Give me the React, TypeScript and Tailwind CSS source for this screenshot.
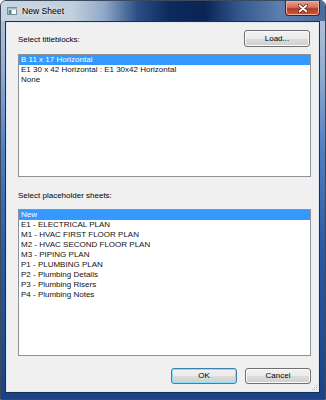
import React from 'react';

const titleblocks = [
  'B 11 x 17 Horizontal',
  'E1 30 x 42 Horizontal : E1 30x42 Horizontal',
  'None',
];

const sheets = [
  'New',
  'E1 - ELECTRICAL PLAN',
  'M1 - HVAC FIRST FLOOR PLAN',
  'M2 - HVAC SECOND FLOOR PLAN',
  'M3 - PIPING PLAN',
  'P1 - PLUMBING PLAN',
  'P2 - Plumbing Details',
  'P3 - Plumbing Risers',
  'P4 - Plumbing Notes',
];

function ListBox({ items, height }: { items: string[]; height: string }) {
  return (
    <div className={`${height} bg-white border border-[#8e9196] overflow-hidden`}>
      {items.map((item, i) => (
        <div
          key={item}
          className={
            i === 0
              ? 'h-[10px] leading-[10px] pl-[2px] bg-[#3399ff] text-white whitespace-nowrap'
              : 'h-[10px] leading-[10px] pl-[2px] text-[#111] whitespace-nowrap'
          }
        >
          {item}
        </div>
      ))}
    </div>
  );
}

function Button({ label, primary }: { label: string; primary?: boolean }) {
  return (
    <button
      className={
        primary
          ? 'w-[66px] h-[16px] rounded-[3px] border border-[#3c7fb1] bg-[linear-gradient(180deg,#f2f2f2_0%,#ebebeb_50%,#dddddd_50%,#cfcfcf_100%)] shadow-[inset_0_0_0_1px_#8ee0f8] text-[8px] leading-[10px] text-black'
          : 'w-[66px] h-[16px] rounded-[3px] border border-[#707070] bg-[linear-gradient(180deg,#f2f2f2_0%,#ebebeb_50%,#dddddd_50%,#cfcfcf_100%)] shadow-[inset_0_0_0_1px_#fbfbfb] text-[8px] leading-[10px] text-black'
      }
    >
      {label}
    </button>
  );
}

export default function App() {
  return (
    <div className="w-[326px] h-[400px] flex flex-col overflow-hidden rounded-t-[6px] border border-[#3b4a5e] bg-[linear-gradient(180deg,#b9c7d7_0%,#91acd0_18%,#4f7dbe_38%,#2d5b9f_62%,#1c4283_100%)] font-['Liberation_Sans',Arial,sans-serif] select-none">
      {/* Title bar */}
      <div className="h-[20px] flex items-start bg-[linear-gradient(90deg,#c9d5e1_0%,#c2cfdd_22%,#8fa7c6_32%,#2c4f85_42%,#0c2a5c_52%,#0a2555_63%,#35598f_74%,#5d7fae_86%,#4b6c9c_100%)]">
        <div className="flex items-center h-[20px] pl-[6px] gap-[5px]">
          <svg width="10" height="8" viewBox="0 0 10 8">
            <rect x="0.5" y="0.5" width="9" height="7" fill="#fafafa" stroke="#7f8a96" />
            <rect x="1" y="1" width="9" height="1.5" fill="#9fb6cc" />
            <rect x="1.5" y="3" width="3" height="4" fill="#3d9a78" />
          </svg>
          <span className="text-[8.6px] leading-[10px] text-black [text-shadow:0_0_5px_#ffffff]">New Sheet</span>
        </div>
        <div className="ml-auto mr-[5px] w-[35px] h-[15px] rounded-b-[4px] border border-t-0 border-[#5a1a14] bg-[linear-gradient(180deg,#e3a596_0%,#d1705c_45%,#b63a25_55%,#c85a3e_100%)] shadow-[inset_0_0_0_1px_#eab0a0] flex items-center justify-center">
          <svg width="10" height="9" viewBox="0 0 10 9">
            <path d="M1.5 1.5 L8.5 7.5 M8.5 1.5 L1.5 7.5" stroke="#5a1a14" strokeWidth="3.2" strokeLinecap="round" />
            <path d="M1.5 1.5 L8.5 7.5 M8.5 1.5 L1.5 7.5" stroke="#ffffff" strokeWidth="1.8" strokeLinecap="round" />
          </svg>
        </div>
      </div>

      {/* Client area */}
      <div className="flex-1 ml-[4px] mr-[5px] mb-[6px] border border-[#15305c] bg-[#f0f0f0] shadow-[inset_0_0_0_1px_#dfe7f0] flex flex-col pl-[12px] pr-[8px] pt-[8px] text-[8px] leading-[10px] text-black relative">
        <div className="h-[17px] flex items-center justify-between">
          <span className="pt-[3px]">Select titleblocks:</span>
          <button className="w-[66px] h-[17px] mr-[1px] rounded-[3px] border border-[#707070] bg-[linear-gradient(180deg,#f2f2f2_0%,#ebebeb_50%,#dddddd_50%,#cfcfcf_100%)] shadow-[inset_0_0_0_1px_#fbfbfb] text-[8px] leading-[10px] text-black">
            Load...
          </button>
        </div>
        <div className="mt-[7px]">
          <ListBox items={titleblocks} height="h-[123px]" />
        </div>
        <div className="mt-[14px] mb-[8px] h-[10px]">Select placeholder sheets:</div>
        <ListBox items={sheets} height="h-[147px]" />
        <div className="mt-[12px] flex justify-end gap-[8px]">
          <Button label="OK" primary />
          <Button label="Cancel" />
        </div>
        <svg className="absolute right-[1px] bottom-[1px]" width="7" height="7" viewBox="0 0 7 7">
          <rect x="5" y="1" width="1" height="1" fill="#b8b8b8" />
          <rect x="3" y="3" width="1" height="1" fill="#b8b8b8" />
          <rect x="5" y="3" width="1" height="1" fill="#b8b8b8" />
          <rect x="1" y="5" width="1" height="1" fill="#b8b8b8" />
          <rect x="3" y="5" width="1" height="1" fill="#b8b8b8" />
          <rect x="5" y="5" width="1" height="1" fill="#b8b8b8" />
        </svg>
      </div>
    </div>
  );
}
